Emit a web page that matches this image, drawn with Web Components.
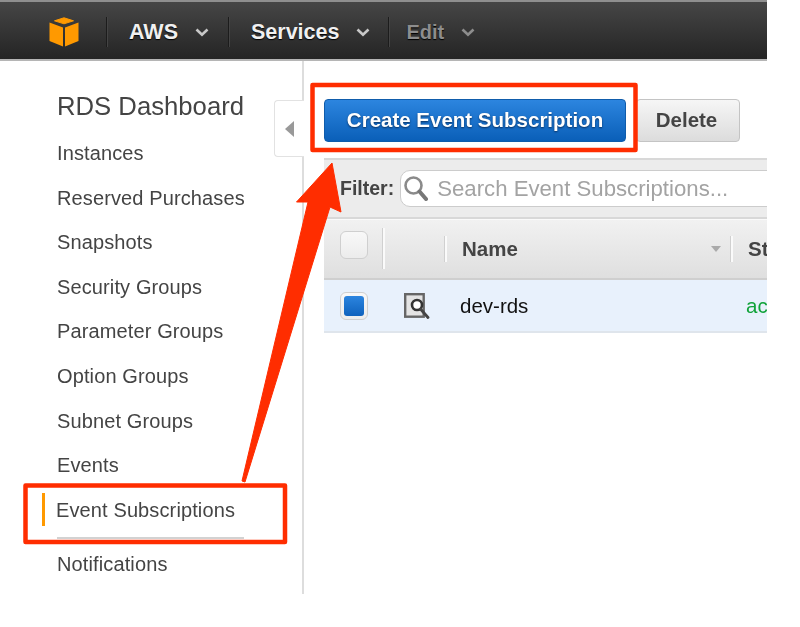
<!DOCTYPE html>
<html lang="en">
<head>
<meta charset="utf-8">
<title>RDS Event Subscriptions</title>
<style>
  html, body { margin: 0; padding: 0; background: #fff; }
  body { font-family: "Liberation Sans", Arial, sans-serif; }
  #page { position: relative; width: 800px; height: 627px; overflow: hidden; filter: blur(.4px); }
  #console { width: 767px; overflow: hidden; }
  #content { display: flex; align-items: flex-start; }
</style>
</head>
<body>
<div id="page">
  <div id="console">
    <aws-nav>
      <nav-item>AWS</nav-item>
      <nav-item>Services</nav-item>
      <nav-item disabled>Edit</nav-item>
    </aws-nav>
    <div id="content">
      <rds-sidebar heading="RDS Dashboard">
        <side-link>Instances</side-link>
        <side-link>Reserved Purchases</side-link>
        <side-link>Snapshots</side-link>
        <side-link>Security Groups</side-link>
        <side-link>Parameter Groups</side-link>
        <side-link>Option Groups</side-link>
        <side-link>Subnet Groups</side-link>
        <side-link>Events</side-link>
        <side-link active>Event Subscriptions</side-link>
        <side-link>Notifications</side-link>
      </rds-sidebar>
      <rds-main>
        <tool-bar>
          <tool-button primary>Create Event Subscription</tool-button>
          <tool-button>Delete</tool-button>
        </tool-bar>
        <filter-bar placeholder="Search Event Subscriptions..."></filter-bar>
        <subs-table></subs-table>
      </rds-main>
    </div>
  </div>
  <shot-annotations></shot-annotations>
</div>

<script>
class AwsNav extends HTMLElement {
    constructor() {
        super();
        this.attachShadow({ mode: 'open' })
    }

    connectedCallback() {
        this.shadowRoot.innerHTML = `
        <style>
        :host {
            display: flex;
            align-items: center;
            box-sizing: border-box;
            height: 61px;
            padding: 3px 0 0 49px;
            background: linear-gradient(#464646, #242424);
            border-top: 2px solid #8f8f8f;
            border-bottom: 2px solid #b5b5b5;
        }
        svg { display: block; width: 30px; height: 30px; margin-right: 27px; }
        </style>
        <svg viewBox="0 0 30 30">
            <path fill="#f90" stroke="#f90" stroke-linejoin="round" d="M15 .8 L24.5 3.8 L15 6.8 L5.5 3.8 Z"/>
            <path fill="#f90" d="M.5 5.5 L14 10.5 L14 29.5 L.5 24 Z"/>
            <path fill="#f90" d="M29.5 5.5 L16 10.5 L16 29.5 L29.5 24 Z"/>
        </svg>
        <slot></slot>
        `
    }
}

class NavItem extends HTMLElement {
    constructor() {
        super();
        this.attachShadow({ mode: 'open' })
    }

    connectedCallback() {
        const color = this.hasAttribute('disabled') ? '#8d8d8d' : '#f0f0f0'
        this.shadowRoot.innerHTML = `
        <style>
        :host {
            display: flex;
            align-items: center;
            height: 30px;
            padding: 0 18px 0 22px;
            border-left: 1px solid #1c1c1c;
            box-shadow: inset 1px 0 0 #444;
            font: bold 21.5px "Liberation Sans", Arial, sans-serif;
            color: ${color};
            text-shadow: 0 1px 1px #000;
        }
        :host(:first-child) { padding-right: 19px; }
        :host([disabled]) { padding-left: 17px; font-size: 20px; }
        svg { display: block; width: 14px; height: 9px; margin-left: 17px; }
        </style>
        <slot></slot>
        <svg viewBox="0 0 14 9">
            <path d="M1.5 1.5 L7 6.8 L12.5 1.5" fill="none" stroke="${this.hasAttribute('disabled') ? '#8d8d8d' : '#c8c8c8'}" stroke-width="2.6"/>
        </svg>
        `
    }
}

class RdsSidebar extends HTMLElement {
    constructor() {
        super();
        this.attachShadow({ mode: 'open' })
    }

    connectedCallback() {
        const heading = this.getAttribute('heading')
        this.shadowRoot.innerHTML = `
        <style>
        :host {
            display: block;
            flex: none;
            box-sizing: border-box;
            width: 304px;
            height: 533px;
            padding: 28px 0 0 57px;
            border-right: 2px solid #ddd;
            font-family: "Liberation Sans", Arial, sans-serif;
            color: #444;
        }
        h1 {
            margin: 0 0 13px;
            font-size: 25.7px;
            font-weight: normal;
            line-height: 34px;
        }
        </style>
        <h1>${heading}</h1>
        <slot></slot>
        `
    }
}

class SideLink extends HTMLElement {
    constructor() {
        super();
        this.attachShadow({ mode: 'open' })
    }

    connectedCallback() {
        this.shadowRoot.innerHTML = `
        <style>
        :host {
            display: block;
            position: relative;
            height: 44.6px;
            line-height: 34px;
            font-size: 20px;
            letter-spacing: .12px;
            color: #444;
        }
        :host([active]) {
            height: 54px;
            margin-left: -1px;
            width: 188px;
        }
        .line { display: none; }
        :host([active]) .line {
            display: block;
            position: absolute;
            left: 1px;
            right: 0;
            top: 44px;
            height: 2px;
            background: #d2d2d2;
        }
        :host([active]) .mark {
            position: absolute;
            left: -14px;
            top: 0;
            width: 3px;
            height: 33px;
            background: #f90;
        }
        </style>
        <span class="mark"></span>
        <slot></slot>
        <span class="line"></span>
        `
    }
}

class RdsMain extends HTMLElement {
    constructor() {
        super();
        this.attachShadow({ mode: 'open' })
    }

    connectedCallback() {
        this.shadowRoot.innerHTML = `
        <style>
        :host {
            display: block;
            position: relative;
            flex: 1;
            min-width: 0;
            padding-left: 20px;
        }
        /* pestanya per plegar el menu, va sobre la vora */
        .tab {
            position: absolute;
            left: -30px;
            top: 39px;
            width: 30px;
            height: 57px;
            box-sizing: border-box;
            display: flex;
            align-items: center;
            justify-content: center;
            background: #fff;
            border: 1px solid #e2e2e2;
            border-right: 0;
            border-radius: 4px 0 0 4px;
        }
        .tab i {
            width: 0;
            height: 0;
            border: 8px solid transparent;
            border-left: 0;
            border-right: 9px solid #999;
        }
        </style>
        <div class="tab"><i></i></div>
        <slot></slot>
        `
    }
}

class ToolBar extends HTMLElement {
    constructor() {
        super();
        this.attachShadow({ mode: 'open' })
    }

    connectedCallback() {
        this.shadowRoot.innerHTML = `
        <style>
        :host {
            display: flex;
            gap: 10px;
            box-sizing: border-box;
            height: 97px;
            padding-top: 38px;
        }
        </style>
        <slot></slot>
        `
    }
}

class ToolButton extends HTMLElement {
    constructor() {
        super();
        this.attachShadow({ mode: 'open' })
    }

    connectedCallback() {
        this.shadowRoot.innerHTML = `
        <style>
        :host {
            display: flex;
            align-items: center;
            justify-content: center;
            box-sizing: border-box;
            width: 104px;
            height: 43px;
            padding: 0 3px 2px 0;
            background: linear-gradient(#f6f6f6, #dcdcdc);
            border: 1px solid #c4c4c4;
            border-radius: 4px;
            font: bold 20.5px "Liberation Sans", Arial, sans-serif;
            color: #444;
        }
        :host([primary]) {
            width: 302px;
            padding-right: 0;
            background: linear-gradient(#2c85df, #0a5fb8);
            border-color: #0f5cab;
            color: #fff;
            text-shadow: 0 1px 2px #0a2f5c;
        }
        </style>
        <slot></slot>
        `
    }
}

class FilterBar extends HTMLElement {
    constructor() {
        super();
        this.attachShadow({ mode: 'open' })
    }

    connectedCallback() {
        const placeholder = this.getAttribute('placeholder')
        this.shadowRoot.innerHTML = `
        <style>
        :host {
            display: flex;
            align-items: center;
            box-sizing: border-box;
            height: 61px;
            padding-left: 16px;
            background: #ececec;
            border-top: 2px solid #d8d8d8;
            border-bottom: 2px solid #d8d8d8;
            font-family: "Liberation Sans", Arial, sans-serif;
        }
        b { font-size: 19.5px; color: #444; margin-right: 6px; }
        .box {
            flex: 1;
            display: flex;
            align-items: center;
            height: 37px;
            box-sizing: border-box;
            margin-right: -12px;
            padding-left: 3px;
            background: #fff;
            border: 1px solid #ccc;
            border-radius: 10px;
            color: #a3a3a3;
            font-size: 22.2px;
            white-space: nowrap;
        }
        svg { display: block; width: 24px; height: 25px; margin-right: 9px; }
        </style>
        <b>Filter:</b>
        <div class="box">
            <svg viewBox="0 0 24 25">
                <circle cx="9.5" cy="9.5" r="8" fill="none" stroke="#8a8a8a" stroke-width="2.6"/>
                <path d="M15.5 15.5 L22 23" stroke="#777" stroke-width="4" stroke-linecap="round"/>
            </svg>
            <span>${placeholder}</span>
        </div>
        `
    }
}

class SubsTable extends HTMLElement {
    constructor() {
        super();
        this.attachShadow({ mode: 'open' })
    }

    connectedCallback() {
        this.shadowRoot.innerHTML = `
        <style>
        :host {
            display: block;
            font-family: "Liberation Sans", Arial, sans-serif;
            font-size: 20.5px;
        }
        .row {
            display: grid;
            grid-template-columns: 59px 62px 286px 36px;
            align-items: center;
            box-sizing: border-box;
        }
        .head {
            height: 61px;
            padding-bottom: 1px;
            background: linear-gradient(#f1f1f1, #dfdfdf);
            border-top: 1px solid #fafafa;
            border-bottom: 2px solid #cfcfcf;
            font-weight: bold;
            color: #444;
        }
        .data {
            height: 53px;
            background: #e8f1fc;
            border-bottom: 2px solid #dfe5ec;
            color: #111;
        }
        .cell { display: flex; align-items: center; box-sizing: border-box; height: 26px; white-space: nowrap; }
        .sep { border-left: 2px solid #fafafa; box-shadow: -1px 0 0 #d0d0d0; }
        .check { padding-left: 16px; }
        .head .check { position: relative; top: -4px; }
        .check i {
            display: flex;
            align-items: center;
            justify-content: center;
            flex: none;
            box-sizing: border-box;
            width: 28px;
            height: 28px;
            background: linear-gradient(#f8f8f8, #ececec);
            border: 1px solid #cfcfcf;
            border-radius: 6px;
        }
        .check u {
            display: block;
            width: 20px;
            height: 20px;
            background: linear-gradient(#2c85df, #0f62bd);
            border-radius: 3px;
        }
        .long { height: 41px; }
        .name { padding-left: 15px; justify-content: space-between; padding-right: 10px; }
        .name i {
            width: 0;
            height: 0;
            border: 5.5px solid transparent;
            border-bottom: 0;
            border-top: 6px solid #aaa;
        }
        .st { padding-left: 15px; }
        .mag { padding-left: 21px; }
        .mag svg { display: block; width: 26px; height: 26px; }
        .dev { padding-left: 15px; }
        .act { padding-left: 15px; color: #12a33a; }
        </style>
        <div class="row head">
            <div class="cell check"><i></i></div>
            <div class="cell sep long"></div>
            <div class="cell sep name"><span>Name</span><i></i></div>
            <div class="cell sep st">St</div>
        </div>
        <div class="row data">
            <div class="cell check"><i><u></u></i></div>
            <div class="cell mag">
                <svg viewBox="0 0 26 26">
                    <rect x="1.2" y="1.2" width="18.5" height="22.5" fill="#e4e4e4" stroke="#666" stroke-width="2.4"/>
                    <circle cx="13" cy="12" r="5" fill="#fff" stroke="#333" stroke-width="2.6"/>
                    <path d="M16.5 16 L24 24.5" stroke="#444" stroke-width="2.8" stroke-linecap="round"/>
                </svg>
            </div>
            <div class="cell dev">dev-rds</div>
            <div class="cell act">ac</div>
        </div>
        `
    }
}

// Marcas rojas de la captura: van encima de todo
class ShotAnnotations extends HTMLElement {
    constructor() {
        super();
        this.attachShadow({ mode: 'open' })
    }

    connectedCallback() {
        this.shadowRoot.innerHTML = `
        <style>
        :host { position: absolute; left: 0; top: 0; width: 800px; height: 627px; pointer-events: none; }
        svg { display: block; }
        </style>
        <svg width="800" height="627" viewBox="0 0 800 627">
            <rect x="312.5" y="85" width="323" height="65" fill="none" stroke="#ff2d00" stroke-width="4.5" stroke-linejoin="round"/>
            <rect x="25.5" y="485.5" width="259.5" height="56.5" fill="none" stroke="#ff2d00" stroke-width="4.5" stroke-linejoin="round"/>
            <path fill="#ff2d00" stroke="#ff2d00" stroke-linejoin="round" d="M242 481 L308 202 L296.5 202 L332 163 L341 212 L330 207 L245 482 Z"/>
        </svg>
        `
    }
}

customElements.define('aws-nav', AwsNav)
customElements.define('nav-item', NavItem)
customElements.define('rds-sidebar', RdsSidebar)
customElements.define('side-link', SideLink)
customElements.define('rds-main', RdsMain)
customElements.define('tool-bar', ToolBar)
customElements.define('tool-button', ToolButton)
customElements.define('filter-bar', FilterBar)
customElements.define('subs-table', SubsTable)
customElements.define('shot-annotations', ShotAnnotations)
</script>
</body>
</html>
